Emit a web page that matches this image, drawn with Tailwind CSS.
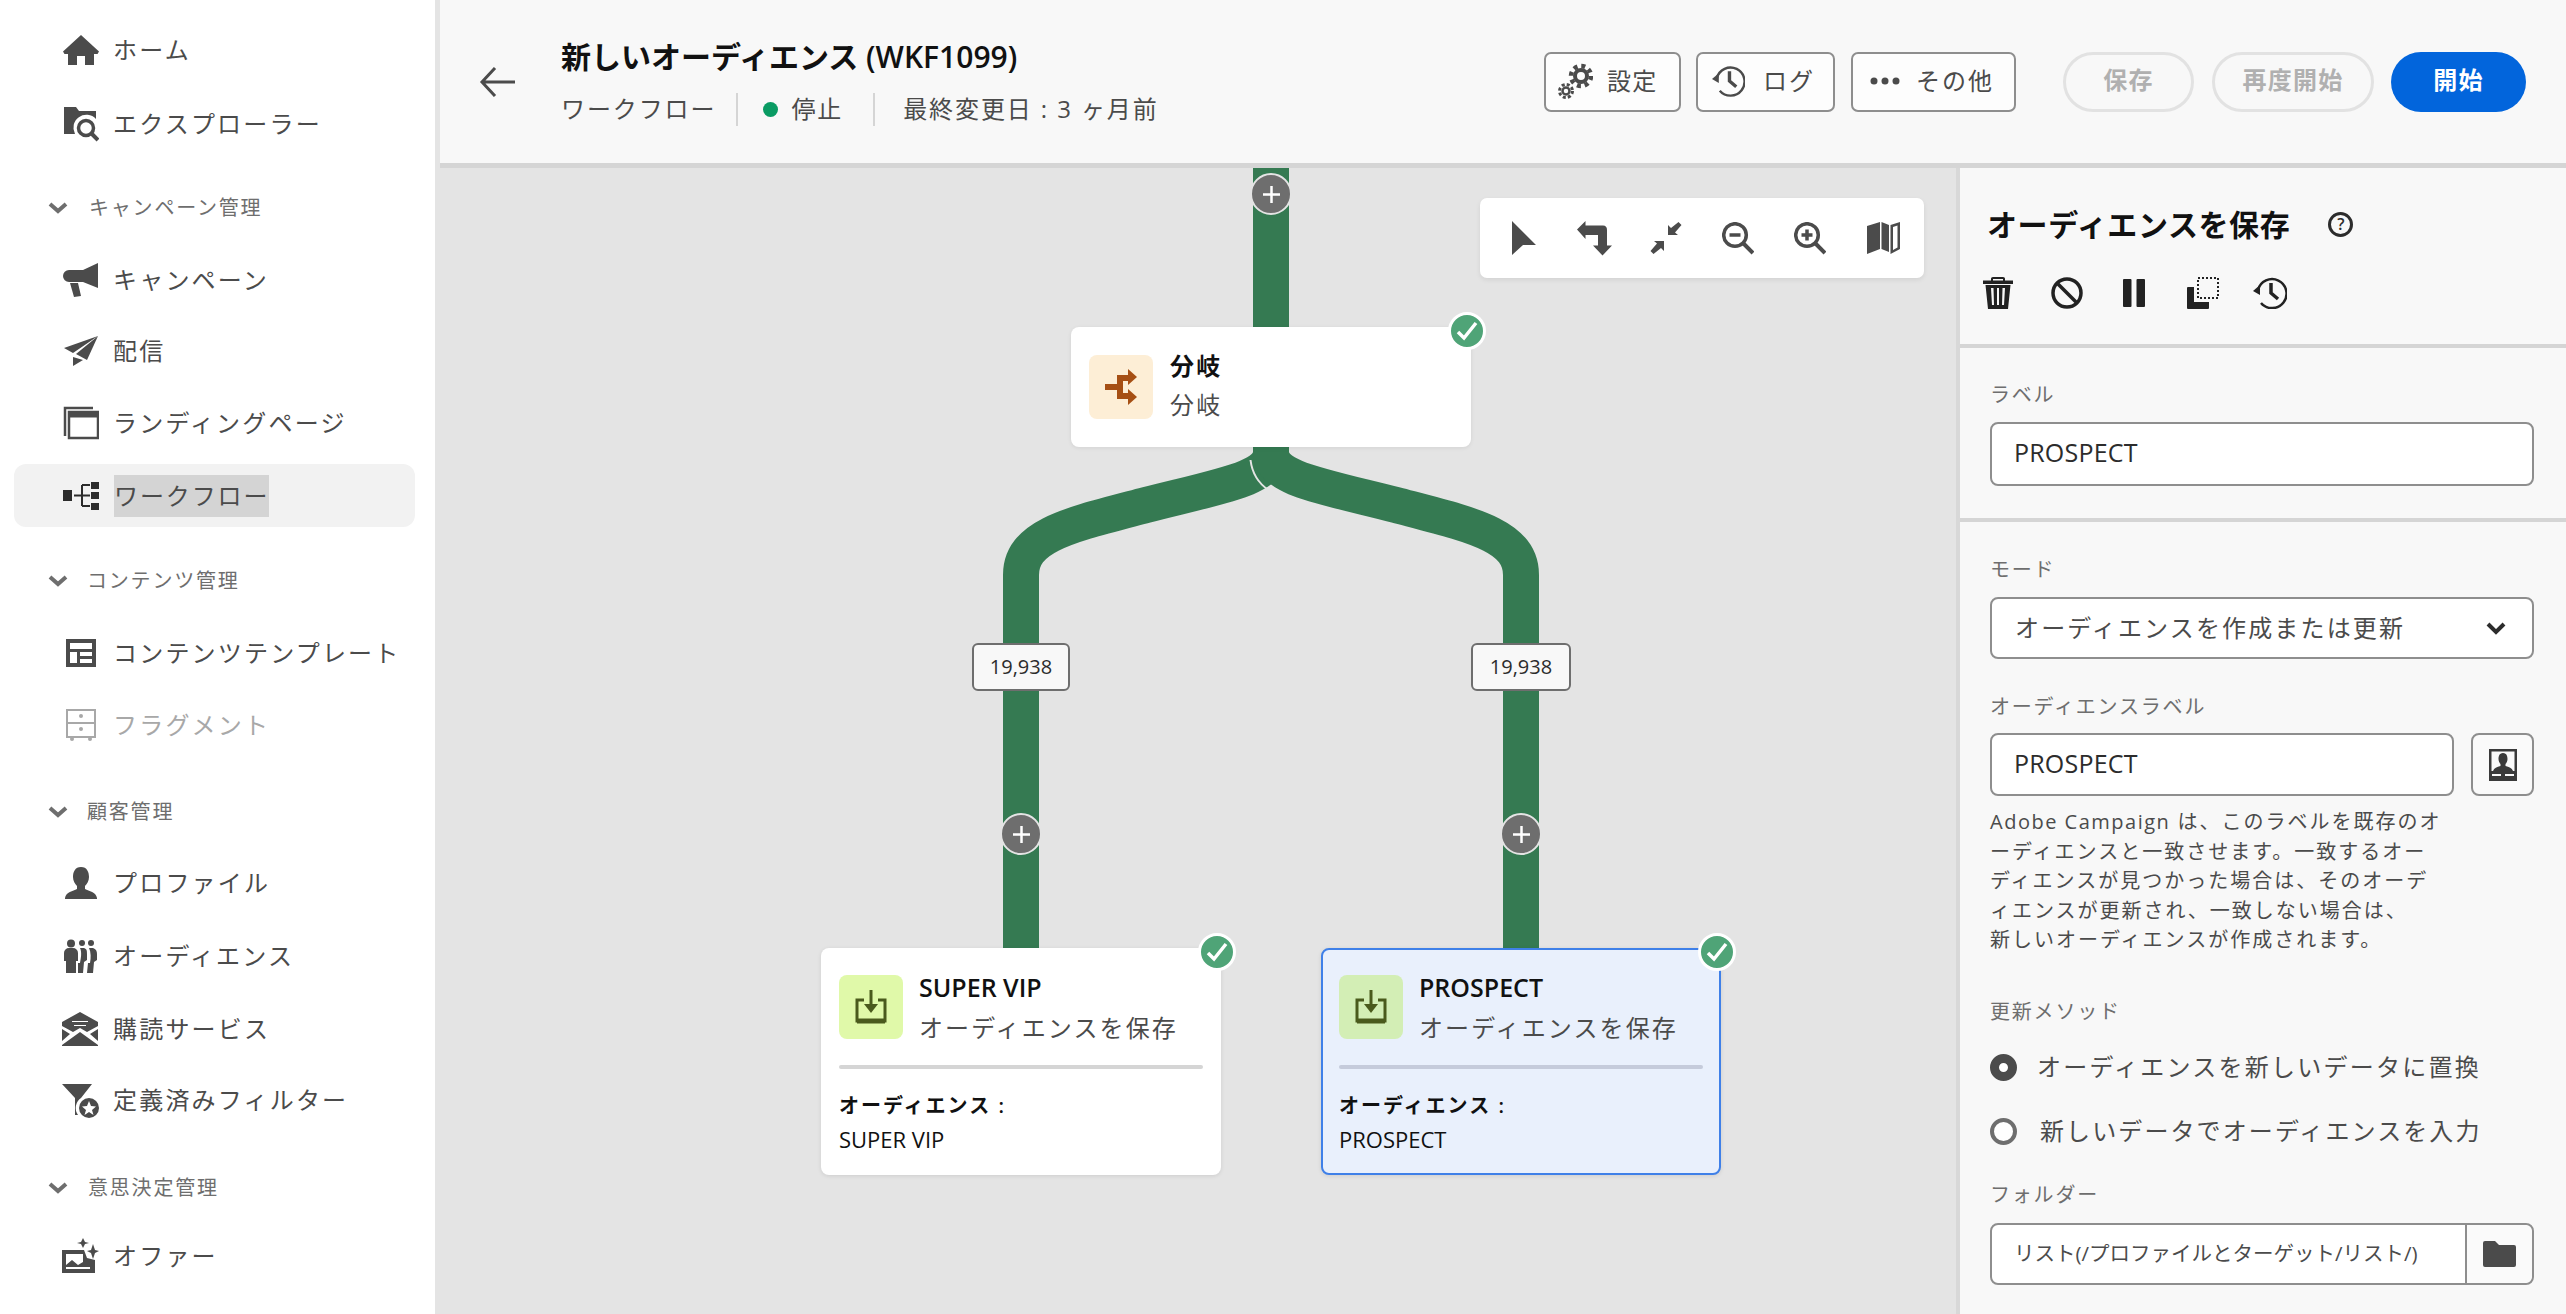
<!DOCTYPE html>
<html lang="ja">
<head>
<meta charset="utf-8">
<script src="https://cdn.jsdelivr.net/npm/@tailwindcss/browser@4"></script>
<title>ワークフロー</title>
</head>
<body class="m-0">
<div class="flex w-[2566px] h-[1314px] overflow-hidden bg-white text-[#4b4b4b] font-['Open_Sans','Noto_Sans_CJK_JP',sans-serif]">

<!-- SIDEBAR -->
<aside class="w-[440px] shrink-0 h-full border-r-[5px] border-[#e4e4e4] bg-white pt-[19px] text-[24px] tracking-[2.2px]">
  <a class="flex items-center h-[62px] pl-[63px]"><svg class="w-[36px] h-[36px] shrink-0" viewBox="0 0 36 36" fill="currentColor"><path d="M18 3 0 19.500 1.500 22H5V33H14V24H22V33H31V22H34.500L36 19.500Z"/></svg><span class="ml-[14px]">ホーム</span></a>
  <a class="flex items-center h-[62px] pl-[63px] mt-[12px]"><svg class="w-[36px] h-[36px] shrink-0" viewBox="0 0 36 36" fill="currentColor"><path d="M1 1H13L16 5H33V13A13 13 0 0 0 12 28H1Z"/><circle cx="23" cy="22" r="7.500" fill="none" stroke="currentColor" stroke-width="3.500"/><path d="M28 27 35 34" stroke="currentColor" stroke-width="4"/></svg><span class="ml-[14px]">エクスプローラー</span></a>

  <div class="flex items-center h-[62px] pl-[48px] mt-[22px] text-[20px] tracking-[1.8px] text-[#6e6e6e]"><svg class="w-[20px] h-[14px] shrink-0" viewBox="0 0 20 14" fill="none" stroke="currentColor" stroke-width="4"><path d="M2 3 10 10 18 3"/></svg><span class="ml-[21px]">キャンペーン管理</span></div>

  <a class="flex items-center h-[62px] pl-[63px] mt-[10px]"><svg class="w-[36px] h-[36px] shrink-0" viewBox="0 0 36 36" fill="currentColor"><path d="M35 1V26L20 20H6A6 6 0 0 1 6 8H20Z"/><path d="M7 21H15L18 34 11 35Z"/></svg><span class="ml-[14px]">キャンペーン</span></a>
  <a class="flex items-center h-[62px] pl-[63px] mt-[9px]"><svg class="w-[36px] h-[36px] shrink-0" viewBox="0 0 36 36" fill="currentColor"><path d="M1 15 35 3 10 20Z"/><path d="M35 3 24 27 13 21Z"/><path d="M10 24 20 27 10 33Z"/></svg><span class="ml-[14px]">配信</span></a>
  <a class="flex items-center h-[62px] pl-[63px] mt-[10px]"><svg class="w-[36px] h-[36px] shrink-0" viewBox="0 0 36 36" fill="none" stroke="currentColor" stroke-width="2.500"><path d="M2 31V3H30" /><path d="M6 7H35V33H6Z"/><path d="M6 10H35" stroke-width="5"/></svg><span class="ml-[14px]">ランディングページ</span></a>
  <a class="flex items-center h-[63px] ml-[14px] mr-[20px] pl-[49px] mt-[10px] rounded-[12px] bg-[#f2f2f2]"><svg class="w-[36px] h-[36px] shrink-0 text-[#2c2c2c]" viewBox="0 0 36 36" fill="currentColor"><rect x="0" y="12" width="9" height="11"/><rect x="28" y="4" width="8" height="7"/><rect x="28" y="14" width="8" height="7"/><rect x="28" y="25" width="8" height="7"/><path d="M11 17.500H19M19 7H27M19 17.500H27M19 28H27M19 7V28" fill="none" stroke="currentColor" stroke-width="2"/></svg><span class="ml-[15px] h-[42px] leading-[42px] tracking-[1.9px] bg-[#d4d4d4]">ワークフロー</span></a>

  <div class="flex items-center h-[62px] pl-[48px] mt-[23px] text-[20px] tracking-[1.8px] text-[#6e6e6e]"><svg class="w-[20px] h-[14px] shrink-0" viewBox="0 0 20 14" fill="none" stroke="currentColor" stroke-width="4"><path d="M2 3 10 10 18 3"/></svg><span class="ml-[19px]">コンテンツ管理</span></div>

  <a class="flex items-center h-[62px] pl-[63px] mt-[10px]"><svg class="w-[36px] h-[36px] shrink-0" viewBox="0 0 36 36" fill="none"><path d="M3 4H33V32H3ZM7 8V14H29V8ZM7 17V28H14V17ZM17 17V21H29V17ZM17 24V28H29V24Z" fill="currentColor" fill-rule="evenodd"/></svg><span class="ml-[14px]">コンテンツテンプレート</span></a>
  <a class="flex items-center h-[62px] pl-[63px] mt-[10px] text-[#a8a8a8]"><svg class="w-[36px] h-[36px] shrink-0" viewBox="0 0 36 36" fill="none" stroke="currentColor" stroke-width="2"><path d="M4 3H32V30H4ZM4 16H32"/><circle cx="18" cy="9" r="2" fill="currentColor" stroke="none"/><circle cx="18" cy="22" r="2" fill="currentColor" stroke="none"/><circle cx="9" cy="32" r="2" fill="currentColor" stroke="none"/><circle cx="27" cy="32" r="2" fill="currentColor" stroke="none"/></svg><span class="ml-[14px]">フラグメント</span></a>

  <div class="flex items-center h-[62px] pl-[48px] mt-[25px] text-[20px] tracking-[1.8px] text-[#6e6e6e]"><svg class="w-[20px] h-[14px] shrink-0" viewBox="0 0 20 14" fill="none" stroke="currentColor" stroke-width="4"><path d="M2 3 10 10 18 3"/></svg><span class="ml-[19px]">顧客管理</span></div>

  <a class="flex items-center h-[62px] pl-[63px] mt-[9px]"><svg class="w-[36px] h-[36px] shrink-0" viewBox="0 0 36 36" fill="currentColor"><path d="M18 2C12 2 10 7 10 12 10 16 12 19 14 21V24C10 26 3 27 2 33V34H34V33C33 27 26 26 22 24V21C24 19 26 16 26 12 26 7 24 2 18 2Z"/></svg><span class="ml-[14px]">プロファイル</span></a>
  <a class="flex items-center h-[62px] pl-[63px] mt-[11px]"><svg class="w-[36px] h-[36px] shrink-0" viewBox="0 0 36 36" fill="currentColor"><circle cx="8" cy="5.500" r="4"/><circle cx="19" cy="5" r="3"/><circle cx="28" cy="5" r="3"/><path d="M1 15A5 5 0 0 1 6 10H10A5 5 0 0 1 15 15V23H13V35H3V23H1Z"/><path d="M17 10H21C24 11 24 13 24 16V22L21 24 20 35H15V25H17C18 20 19 14 17 10Z"/><path d="M26 10H30C33 11 34 13 34 16V22L31 24 30 35H24L25 25H27C28 20 28 14 26 10Z"/></svg><span class="ml-[14px]">オーディエンス</span></a>
  <a class="flex items-center h-[62px] pl-[61px] mt-[11px]"><svg class="w-[38px] h-[36px] shrink-0" viewBox="0 0 38 36" fill="currentColor"><path d="M19 1 37 11V15L26 21 19 17 12 21 1 15V11ZM11 10V11H27V10ZM13 14V15H25V14Z" fill-rule="evenodd"/><path d="M1 18 9 23 1 30ZM37 18 29 23 37 30ZM19 21 37 34V35H1V34Z"/></svg><span class="ml-[14px]">購読サービス</span></a>
  <a class="flex items-center h-[62px] pl-[62px] mt-[9px]"><svg class="w-[37px] h-[36px] shrink-0" viewBox="0 0 37 36" fill="currentColor"><path d="M0 2H30L19 16A12 12 0 0 0 16 33H13V16Z"/><circle cx="27" cy="26" r="10"/><path d="M27 19 29 24 34 24.500 30 28 31.500 33 27 30 22.500 33 24 28 20 24.500 25 24Z" fill="#fff"/></svg><span class="ml-[14px]">定義済みフィルター</span></a>

  <div class="flex items-center h-[62px] pl-[48px] mt-[26px] text-[20px] tracking-[1.8px] text-[#6e6e6e]"><svg class="w-[20px] h-[14px] shrink-0" viewBox="0 0 20 14" fill="none" stroke="currentColor" stroke-width="4"><path d="M2 3 10 10 18 3"/></svg><span class="ml-[20px]">意思決定管理</span></div>

  <a class="flex items-center h-[62px] pl-[62px] mt-[6px]"><svg class="w-[37px] h-[36px] shrink-0" viewBox="0 0 37 36" fill="currentColor"><path d="M0 12H22L25 20 33 22V35H0ZM4 16V27L10 22 16 27 21 24V16ZM4 29V31H28V29Z" fill-rule="evenodd"/><path d="M21 0 23 4 27 5 23 6 21 10 19 6 15 5 19 4ZM31 6 33 12 37 13 33 15 31 21 29 15 25 13 29 12Z"/></svg><span class="ml-[14px]">オファー</span></a>
</aside>

<!-- MAIN -->
<div class="flex-1 min-w-0 flex flex-col h-full">
  <!-- HEADER -->
  <header class="h-[168px] shrink-0 border-b-[5px] border-[#d5d5d5] bg-[#f8f8f8] flex items-center pl-[39px] pr-[40px]">
    <svg class="w-[37px] h-[30px] shrink-0" viewBox="0 0 37 30" fill="none" stroke="#4b4b4b" stroke-width="3"><path d="M36 15H3M16 1 3 15 16 29"/></svg>
    <div class="ml-[45px] flex flex-col">
      <h1 class="text-[30px] leading-[40px] font-semibold text-[#111] whitespace-nowrap">新しいオーディエンス (WKF1099)</h1>
      <div class="mt-[15px] flex items-center h-[34px] text-[24px] tracking-[1.9px] whitespace-nowrap">
        <span>ワークフロー</span>
        <span class="ml-[20px] w-[2px] h-[33px] bg-[#d5d5d5]"></span>
        <span class="ml-[25px] w-[15px] h-[15px] rounded-full bg-[#0a9b63]"></span>
        <span class="ml-[13px]">停止</span>
        <span class="ml-[30px] w-[2px] h-[33px] bg-[#d5d5d5]"></span>
        <span class="ml-[28px]">最終変更日 : 3 ヶ月前</span>
      </div>
    </div>
    <div class="ml-auto flex items-center text-[24px] tracking-[1.2px] whitespace-nowrap">
      <button class="w-[137px] h-[60px] flex items-center pl-[12px] pb-[2px] gap-[14px] rounded-[7px] border-2 border-[#8e8e8e] bg-[#fdfdfd]"><svg class="w-[35px] h-[36px] shrink-0" viewBox="0 0 35 36" fill="none" stroke="#4b4b4b"><circle cx="23" cy="13" r="6" stroke-width="4"/><circle cx="23" cy="13" r="10" stroke-width="4.500" stroke-dasharray="4 3.850"/><circle cx="8" cy="28" r="3.500" stroke-width="2.500"/><circle cx="8" cy="28" r="6.500" stroke-width="3" stroke-dasharray="3 2.100"/></svg><span>設定</span></button>
      <button class="ml-[15px] w-[139px] h-[60px] flex items-center pl-[14px] pb-[2px] gap-[18px] rounded-[7px] border-2 border-[#8e8e8e] bg-[#fdfdfd]"><svg class="w-[33px] h-[32px] shrink-0" viewBox="0 0 34 32" fill="none" stroke="#4b4b4b" stroke-width="2.500"><path d="M5 13A14.500 14.500 0 1 1 8 26"/><path d="M18 6V16L25 22" stroke-width="3.500"/><path d="M0 14 7 8V18Z" fill="#4b4b4b" stroke="none"/></svg><span class="tracking-[2px]">ログ</span></button>
      <button class="ml-[16px] w-[165px] h-[60px] flex items-center pl-[17px] pb-[2px] gap-[16px] rounded-[7px] border-2 border-[#8e8e8e] bg-[#fdfdfd]"><svg class="w-[30px] h-[8px] shrink-0" viewBox="0 0 30 8" fill="#4b4b4b"><circle cx="4" cy="4" r="3.500"/><circle cx="15" cy="4" r="3.500"/><circle cx="26" cy="4" r="3.500"/></svg><span class="tracking-[2px]">その他</span></button>
      <button class="ml-[47px] w-[131px] h-[60px] pb-[3px] rounded-full border-[3px] border-[#e2e2e2] text-[#b0b0b0] font-semibold">保存</button>
      <button class="ml-[18px] w-[162px] h-[60px] pb-[3px] rounded-full border-[3px] border-[#e2e2e2] text-[#b0b0b0] font-semibold">再度開始</button>
      <button class="ml-[17px] w-[135px] h-[60px] pb-[3px] rounded-full bg-[#0265dc] text-white font-semibold">開始</button>
    </div>
  </header>

  <div class="flex-1 min-h-0 flex">
    <!-- CANVAS -->
    <section class="relative flex-1 min-w-0 bg-[#e4e4e4] overflow-hidden">
      <svg class="absolute inset-0 w-[1516px] h-[1146px]" viewBox="440 168 1516 1146" fill="none" stroke="#357a52" stroke-width="36">
        <path d="M1271 160V330"/>
        <path d="M1271 440V452C1271 478 1225 485 1146 505 1070 525 1021 535 1021 575V952"/>
        <path d="M1271 440V452C1271 478 1317 485 1396 505 1472 525 1521 535 1521 575V952"/>
        <path d="M1250.500 460C1252 472 1258 483 1268.500 490" stroke="#e4e4e4" stroke-width="2"/>
      </svg>

      <!-- toolbar -->
      <div class="absolute left-[1040px] top-[30px] w-[444px] h-[80px] rounded-[7px] bg-white shadow-[0_2px_5px_rgba(0,0,0,0.08)] flex items-center pl-[32px] text-[#4b4b4b]">
        <svg class="w-[24px] h-[34px] shrink-0" viewBox="0 0 24 34" fill="currentColor"><path d="M0 0 24 24H11L0 34Z"/></svg>
        <svg class="ml-[41px] w-[35px] h-[35px] shrink-0" viewBox="0 0 35 35" fill="currentColor"><path d="M0 8.500 8.500 0V4.500H26Q30 4.500 30 9V24.500H35L25.500 34.500 16 24.500H21V14H8.500V18Z"/></svg>
        <svg class="ml-[38px] w-[32px] h-[32px] shrink-0" viewBox="0 0 32 32" fill="currentColor"><path d="M18 13V3L21 6 28.500 0 31.500 3 25 10.500 28 13Z"/><path d="M14 19V29L11 26 3.500 32 .5 29 7 21.500 4 19Z"/></svg>
        <svg class="ml-[40px] w-[32px] h-[33px] shrink-0" viewBox="0 0 32 33" fill="none" stroke="currentColor"><circle cx="13" cy="13" r="11.300" stroke-width="3.500"/><path d="M21 21 31 31" stroke-width="4"/><path d="M7.500 13H18.500" stroke-width="3.500"/></svg>
        <svg class="ml-[40px] w-[32px] h-[33px] shrink-0" viewBox="0 0 32 33" fill="none" stroke="currentColor"><circle cx="13" cy="13" r="11.300" stroke-width="3.500"/><path d="M21 21 31 31" stroke-width="4"/><path d="M7.500 13H18.500M13 7.500V18.500" stroke-width="3.500"/></svg>
        <svg class="ml-[41px] w-[33px] h-[32px] shrink-0" viewBox="0 0 33 32" fill="currentColor"><path d="M0 4 13 0V27L0 32Z"/><path d="M14.500 0 22 3V30L14.500 27Z"/><path d="M23.500 3 33 0V27L23.500 32ZM26 5V28L30.500 25.500V3.500Z" fill-rule="evenodd"/></svg>
      </div>

      <!-- plus buttons -->
      <div class="absolute left-[810px] top-[5px] w-[42px] h-[42px] rounded-full bg-[#6e6e6e] border-2 border-[#e4e4e4] flex items-center justify-center"><svg class="w-[17px] h-[17px]" viewBox="0 0 17 17" stroke="#fff" stroke-width="2.500"><path d="M8.500 0V17M0 8.500H17"/></svg></div>
      <div class="absolute left-[560px] top-[645px] w-[42px] h-[42px] rounded-full bg-[#6e6e6e] border-2 border-[#e4e4e4] flex items-center justify-center"><svg class="w-[17px] h-[17px]" viewBox="0 0 17 17" stroke="#fff" stroke-width="2.500"><path d="M8.500 0V17M0 8.500H17"/></svg></div>
      <div class="absolute left-[1060px] top-[645px] w-[42px] h-[42px] rounded-full bg-[#6e6e6e] border-2 border-[#e4e4e4] flex items-center justify-center"><svg class="w-[17px] h-[17px]" viewBox="0 0 17 17" stroke="#fff" stroke-width="2.500"><path d="M8.500 0V17M0 8.500H17"/></svg></div>

      <!-- count labels -->
      <div class="absolute left-[532px] top-[475px] w-[98px] h-[48px] rounded-[6px] border-2 border-[#6e6e6e] bg-[#f8f8f8] flex items-center justify-center text-[20px] text-[#2c2c2c]">19,938</div>
      <div class="absolute left-[1031px] top-[475px] w-[100px] h-[48px] rounded-[6px] border-2 border-[#6e6e6e] bg-[#f8f8f8] flex items-center justify-center text-[20px] text-[#2c2c2c]">19,938</div>

      <!-- split node -->
      <div class="absolute left-[631px] top-[159px] w-[400px] h-[120px] rounded-[8px] bg-white shadow-[0_1px_4px_rgba(0,0,0,0.08)] flex pl-[18px] pt-[28px]">
        <div class="w-[64px] h-[64px] rounded-[8px] bg-[#fdeed6] flex items-center justify-center"><svg class="w-[32px] h-[36px]" viewBox="0 0 32 36" fill="#a64f14"><path d="M0 15H12V6H23V0L32 8 23 16V12H18V24H23V20L32 28 23 36V30H12V21H0Z"/></svg></div>
        <div class="ml-[17px] text-[24px] tracking-[2.200px] leading-[36px]">
          <div class="font-semibold text-[#111] -mt-[7px]">分岐</div>
          <div class="mt-[3px]">分岐</div>
        </div>
      </div>
      <div class="absolute left-[1008px] top-[144px] w-[38px] h-[38px] rounded-full bg-[#4fa477] border-[3px] border-white flex items-center justify-center"><svg class="w-[22px] h-[20px]" viewBox="0 0 22 20" fill="none" stroke="#fff" stroke-width="3.500"><path d="M2 11 8 17 20 2"/></svg></div>

      <!-- SUPER VIP -->
      <div class="absolute left-[381px] top-[780px] w-[400px] h-[227px] rounded-[8px] bg-white shadow-[0_1px_4px_rgba(0,0,0,0.1)] px-[18px] pt-[26px]">
        <div class="flex">
          <div class="w-[64px] h-[64px] shrink-0 mt-[1px] rounded-[8px] bg-[#e0f9a9] flex items-center justify-center"><svg class="w-[32px] h-[34px]" viewBox="0 0 32 34" fill="none" stroke="#4a5a1c" stroke-width="3"><path d="M9 10H2V31H30V10H23"/><path d="M2 31H30" stroke-width="5"/><path d="M16 0V20"/><path d="M9 14H23L16 23Z" fill="#4a5a1c" stroke="none"/></svg></div>
          <div class="ml-[16px] whitespace-nowrap">
            <div class="text-[25px] leading-[26px] font-semibold text-[#111]">SUPER VIP</div>
            <div class="mt-[13px] text-[24px] leading-[30px] tracking-[2.100px]">オーディエンスを保存</div>
          </div>
        </div>
        <div class="mt-[22px] h-[4px] rounded-full bg-[#d5d5d5]"></div>
        <div class="mt-[23px] text-[20px] leading-[28px] font-semibold text-[#111] tracking-[2px]">オーディエンス :</div>
        <div class="mt-[5px] text-[22px] leading-[28px] text-[#111]">SUPER VIP</div>
      </div>
      <div class="absolute left-[758px] top-[765px] w-[38px] h-[38px] rounded-full bg-[#4fa477] border-[3px] border-white flex items-center justify-center"><svg class="w-[22px] h-[20px]" viewBox="0 0 22 20" fill="none" stroke="#fff" stroke-width="3.500"><path d="M2 11 8 17 20 2"/></svg></div>

      <!-- PROSPECT -->
      <div class="absolute left-[881px] top-[780px] w-[400px] h-[227px] rounded-[8px] bg-[#e9f0fc] border-2 border-[#3f80e8] shadow-[0_1px_4px_rgba(0,0,0,0.1)] px-[16px] pt-[24px]">
        <div class="flex">
          <div class="w-[64px] h-[64px] shrink-0 mt-[1px] rounded-[8px] bg-[#d3eeb5] flex items-center justify-center"><svg class="w-[32px] h-[34px]" viewBox="0 0 32 34" fill="none" stroke="#4a5a1c" stroke-width="3"><path d="M9 10H2V31H30V10H23"/><path d="M2 31H30" stroke-width="5"/><path d="M16 0V20"/><path d="M9 14H23L16 23Z" fill="#4a5a1c" stroke="none"/></svg></div>
          <div class="ml-[16px] whitespace-nowrap">
            <div class="text-[25px] leading-[26px] font-semibold text-[#111]">PROSPECT</div>
            <div class="mt-[13px] text-[24px] leading-[30px] tracking-[2.100px]">オーディエンスを保存</div>
          </div>
        </div>
        <div class="mt-[22px] h-[4px] rounded-full bg-[#c5cbdb]"></div>
        <div class="mt-[23px] text-[20px] leading-[28px] font-semibold text-[#111] tracking-[2px]">オーディエンス :</div>
        <div class="mt-[5px] text-[22px] leading-[28px] text-[#111]">PROSPECT</div>
      </div>
      <div class="absolute left-[1258px] top-[765px] w-[38px] h-[38px] rounded-full bg-[#4fa477] border-[3px] border-white flex items-center justify-center"><svg class="w-[22px] h-[20px]" viewBox="0 0 22 20" fill="none" stroke="#fff" stroke-width="3.500"><path d="M2 11 8 17 20 2"/></svg></div>
    </section>

    <!-- PANEL -->
    <aside class="w-[610px] shrink-0 h-full border-l-4 border-[#d8d8d8] bg-[#f8f8f8] text-[#4b4b4b]">
      <div class="h-[180px] border-b-4 border-[#d5d5d5] pl-[27px] pt-[36px]">
        <div class="flex items-center h-[40px]">
          <span class="text-[30px] font-semibold text-[#111] tracking-[0.6px] whitespace-nowrap">オーディエンスを保存</span>
          <span class="ml-[38px] w-[25px] h-[25px] rounded-full border-[3px] border-[#2c2c2c] flex items-center justify-center text-[16px] font-semibold text-[#2c2c2c]">?</span>
        </div>
        <div class="mt-[31px] flex items-center h-[36px] text-[#222]">
          <svg class="w-[30px] h-[32px] shrink-0 -ml-[4px]" viewBox="0 0 30 32" fill="currentColor"><path d="M0 3.500H8V1.500Q8 0 10 0H20Q22 0 22 1.500V3.500H30V7H0ZM10 3.500H20V2H10Z" fill-rule="evenodd"/><path d="M2.500 8H27.500L25 32H5ZM8 11 9 28H11L10.500 11ZM14 11V28H16V11ZM19.500 11 19 28H21L22 11Z" fill-rule="evenodd"/></svg>
          <svg class="ml-[38px] w-[32px] h-[32px] shrink-0" viewBox="0 0 32 32" fill="none" stroke="currentColor" stroke-width="3.500"><circle cx="16" cy="16" r="14"/><path d="M6 6 26 26"/></svg>
          <svg class="ml-[40px] w-[22px] h-[28px] shrink-0" viewBox="0 0 22 28" fill="currentColor"><rect x="0" y="0" width="8.500" height="28" rx="1"/><rect x="13.500" y="0" width="8.500" height="28" rx="1"/></svg>
          <svg class="ml-[42px] w-[32px] h-[32px] shrink-0" viewBox="0 0 32 32" fill="currentColor"><path d="M0 11Q0 10 1 10H7V25H22V31Q22 32 21 32H1Q0 32 0 31Z"/><rect x="11" y="1" width="20" height="20" fill="none" stroke="currentColor" stroke-width="2" stroke-dasharray="2 2"/></svg>
          <svg class="ml-[34px] w-[34px] h-[32px] shrink-0" viewBox="0 0 34 32" fill="none" stroke="currentColor" stroke-width="2.500"><path d="M5 13A14.500 14.500 0 1 1 8 26"/><path d="M18 6V16L25 22" stroke-width="3.500"/><path d="M0 14 7 8V18Z" fill="currentColor" stroke="none"/></svg>
        </div>
      </div>

      <div class="h-[174px] border-b-4 border-[#d5d5d5] pl-[30px] pr-[32px] pt-[32px]">
        <label class="block h-[30px] leading-[30px] text-[20px] tracking-[1.8px] text-[#6e6e6e]">ラベル</label>
        <div class="mt-[12px] h-[64px] rounded-[8px] border-2 border-[#8e8e8e] bg-white flex items-center pl-[22px] pb-[2px] text-[25px] tracking-[0.2px] text-[#2c2c2c]">PROSPECT</div>
      </div>

      <div class="pl-[30px] pr-[32px] pt-[33px]">
        <label class="block h-[30px] leading-[30px] text-[20px] tracking-[1.8px] text-[#6e6e6e]">モード</label>
        <div class="mt-[12px] h-[62px] rounded-[8px] border-2 border-[#8e8e8e] bg-white flex items-center justify-between pl-[23px] pr-[26px] text-[24px] tracking-[2.150px]"><span class="whitespace-nowrap">オーディエンスを作成または更新</span><svg class="w-[20px] h-[14px]" viewBox="0 0 20 14" fill="none" stroke="#2c2c2c" stroke-width="4"><path d="M2 3 10 11 18 3"/></svg></div>

        <label class="block mt-[33px] h-[30px] leading-[30px] text-[20px] tracking-[1.8px] text-[#6e6e6e]">オーディエンスラベル</label>
        <div class="mt-[11px] flex gap-[17px]">
          <div class="flex-1 h-[63px] rounded-[8px] border-2 border-[#8e8e8e] bg-white flex items-center pl-[22px] pb-[2px] text-[25px] tracking-[0.2px] text-[#2c2c2c]">PROSPECT</div>
          <div class="w-[63px] h-[63px] rounded-[8px] border-2 border-[#8e8e8e] bg-[#fafafa] flex items-center justify-center"><svg class="w-[28px] h-[32px]" viewBox="0 0 28 32" fill="#3a3a3a"><path d="M0 0H28V32H0ZM2.500 2.500V22H25.500V2.500ZM3 25V27H12V25ZM16 25V27H25V25Z" fill-rule="evenodd"/><path d="M14 4C10 4 9.500 8 9.500 10 9.500 12 10.500 14 11.500 15V17C8 18 5 19 4 22H24C23 19 20 18 16.500 17V15C17.500 14 18.500 12 18.500 10 18.500 8 18 4 14 4Z"/></svg></div>
        </div>
        <p class="mt-[11px] text-[20px] leading-[29.500px] tracking-[2px] whitespace-nowrap"><span class="tracking-[1.500px]">Adobe Campaign</span> は、このラベルを既存のオ<br>ーディエンスと一致させます。一致するオー<br>ディエンスが見つかった場合は、そのオーデ<br>ィエンスが更新され、一致しない場合は、<br>新しいオーディエンスが作成されます。</p>

        <label class="block mt-[42px] h-[30px] leading-[30px] text-[20px] tracking-[1.8px] text-[#6e6e6e]">更新メソッド</label>
        <div class="mt-[21px] h-[40px] flex items-center text-[24px] tracking-[2.250px] whitespace-nowrap"><span class="w-[27px] h-[27px] rounded-full border-[9px] border-[#4b4b4b] bg-white shrink-0"></span><span class="ml-[20px] -mt-[2px]">オーディエンスを新しいデータに置換</span></div>
        <div class="mt-[24px] h-[40px] flex items-center text-[24px] tracking-[2.100px] whitespace-nowrap"><span class="w-[27px] h-[27px] rounded-full border-[4px] border-[#6e6e6e] bg-white shrink-0"></span><span class="ml-[23px] -mt-[2px]">新しいデータでオーディエンスを入力</span></div>

        <label class="block mt-[28px] h-[30px] leading-[30px] text-[20px] tracking-[1.8px] text-[#6e6e6e]">フォルダー</label>
        <div class="mt-[13px] h-[62px] rounded-[8px] border-2 border-[#8e8e8e] bg-white flex">
          <div class="flex-1 flex items-center pl-[22px] text-[20.500px] whitespace-nowrap">リスト(/プロファイルとターゲット/リスト/)</div>
          <div class="w-[67px] border-l-2 border-[#8e8e8e] bg-[#fafafa] rounded-r-[8px] flex items-center justify-center"><svg class="w-[33px] h-[26px]" viewBox="0 0 33 26" fill="#4b4b4b"><path d="M0 2Q0 0 2 0H12L16 4H31Q33 4 33 6V24Q33 26 31 26H2Q0 26 0 24Z"/></svg></div>
        </div>
      </div>
    </aside>
  </div>
</div>
</body>
</html>
